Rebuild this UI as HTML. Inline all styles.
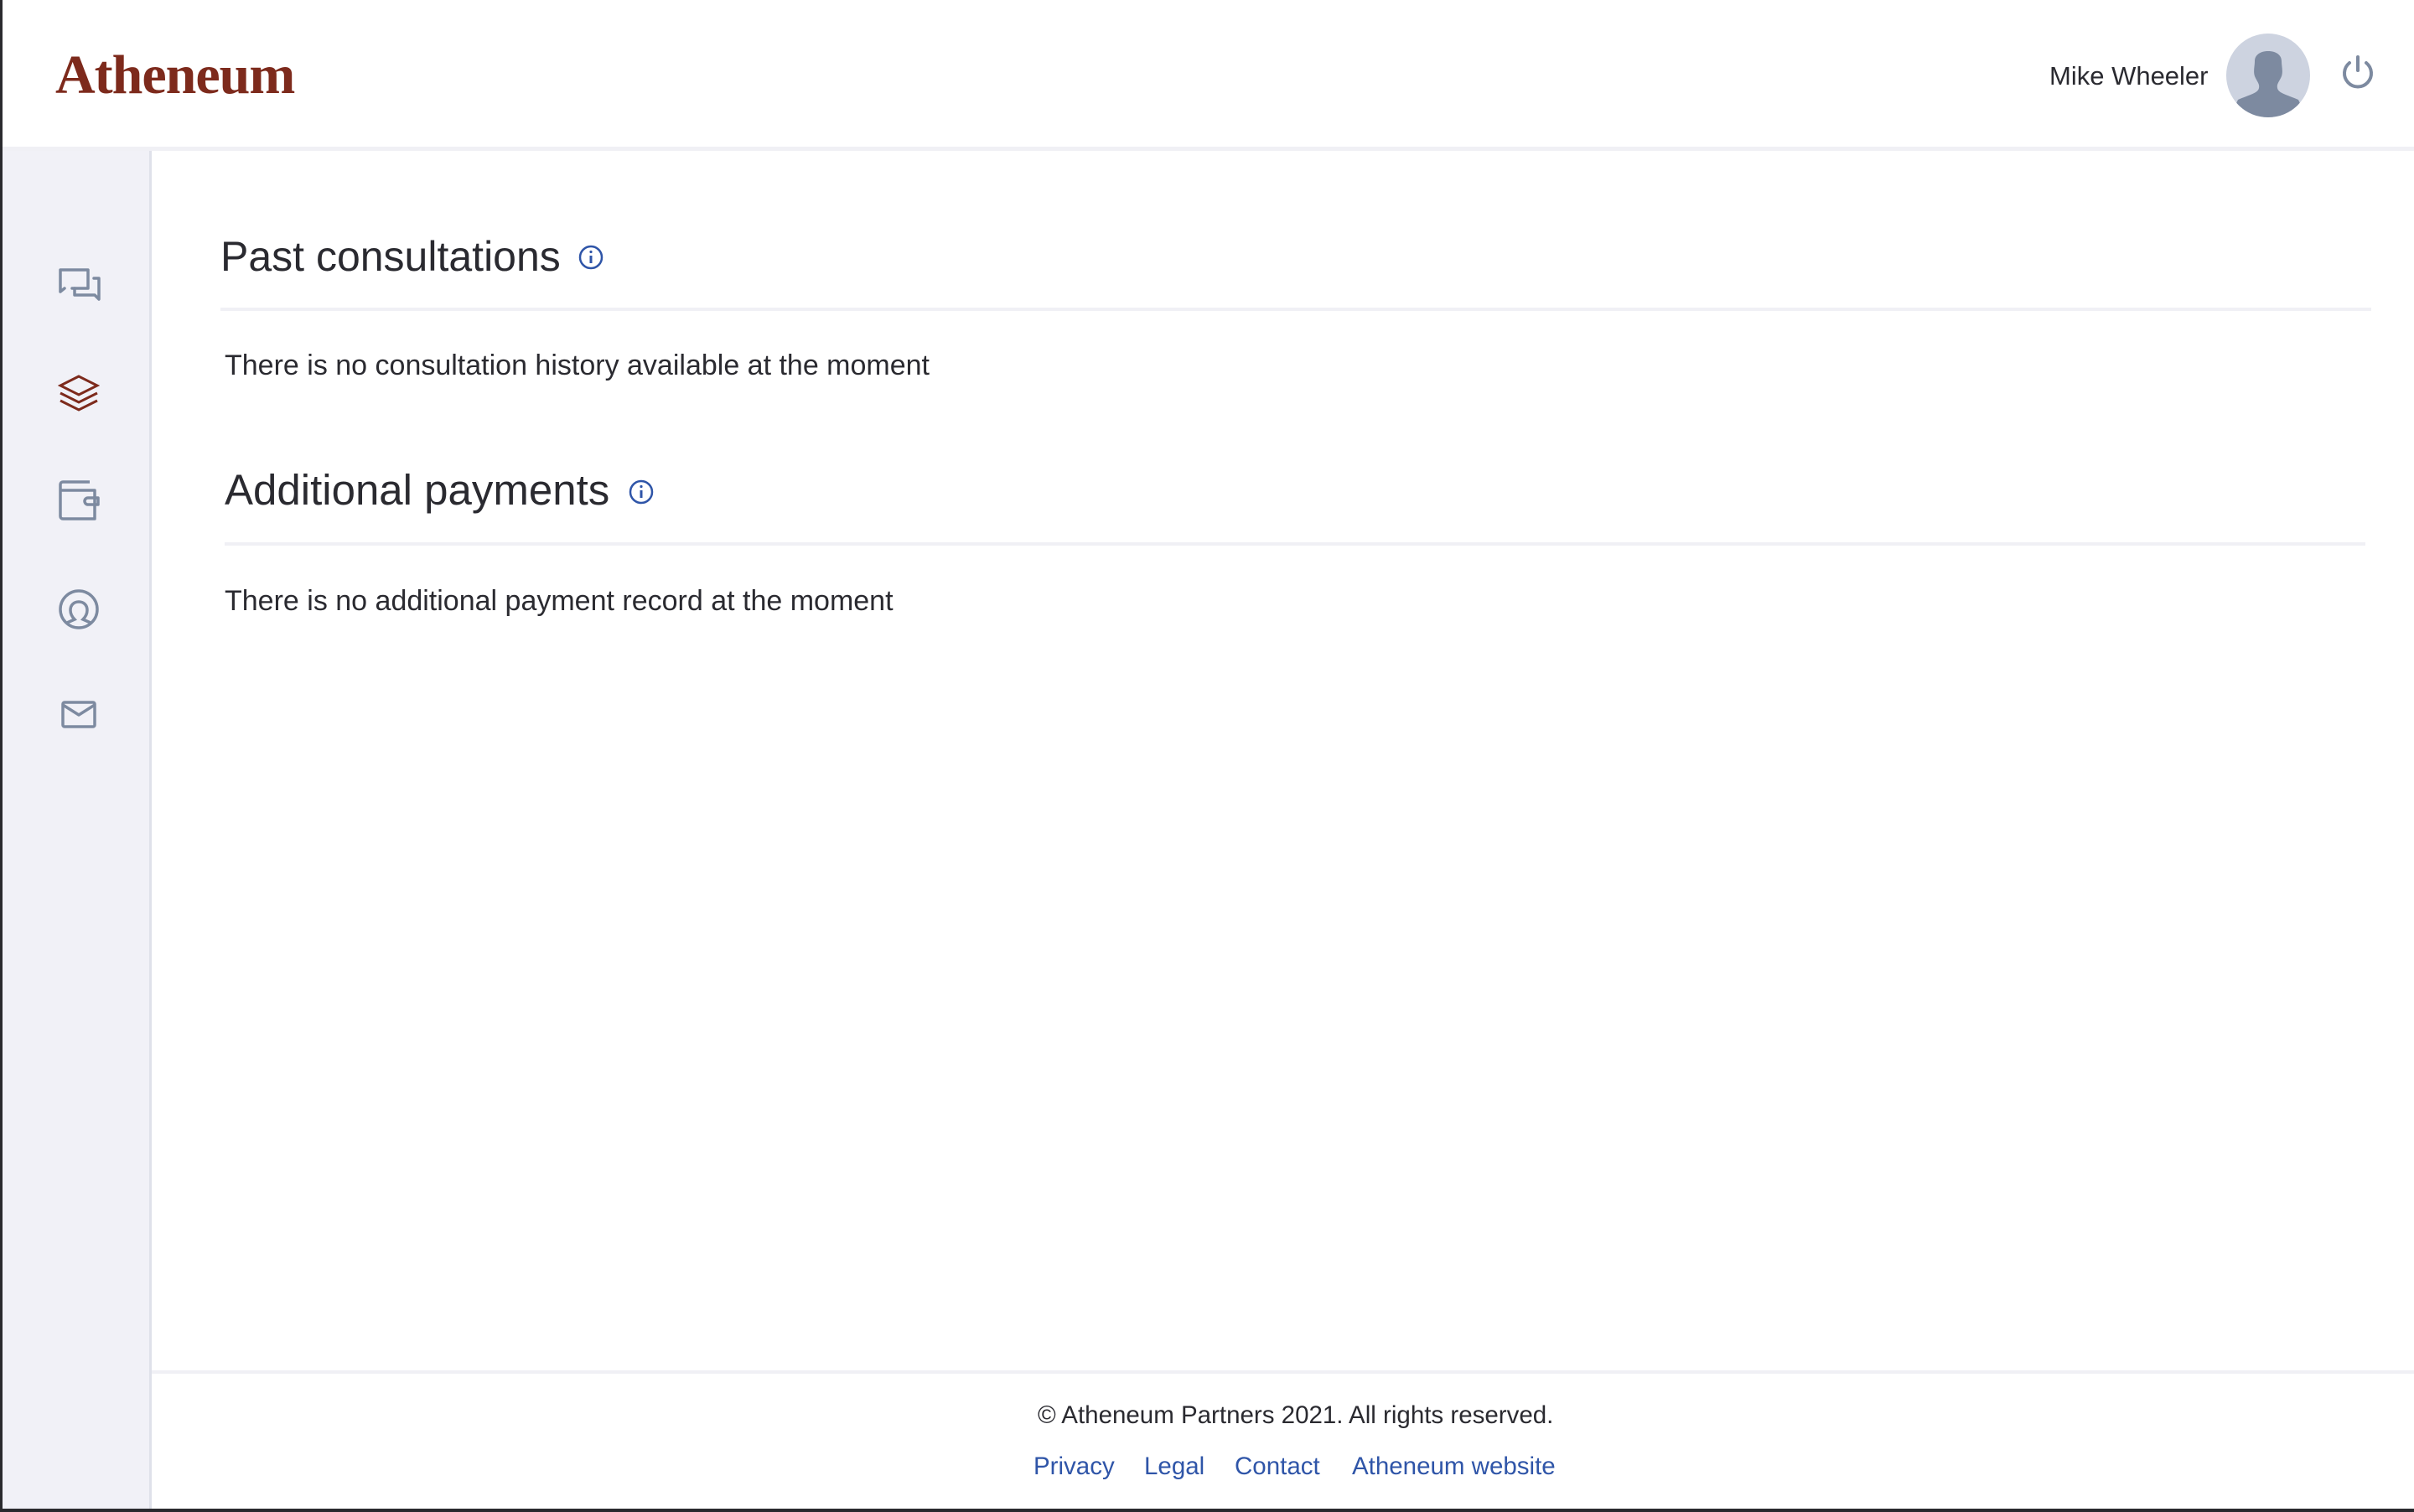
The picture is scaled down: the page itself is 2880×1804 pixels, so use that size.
<!DOCTYPE html>
<html><head><meta charset="utf-8"><style>
*{margin:0;padding:0;box-sizing:border-box}
body{width:2880px;height:1804px;position:relative;background:#fff;font-family:"Liberation Sans",sans-serif;color:#2a2a30;overflow:hidden}
.abs{position:absolute;white-space:nowrap}
</style></head><body>
<div class="abs" style="left:0;top:0;width:3px;height:1804px;background:#2a2a2e"></div>
<div class="abs" style="left:0;top:1800px;width:2880px;height:4px;background:#2a2a2e"></div>
<!-- header -->
<div class="abs" style="left:66px;top:50px;font-family:'Liberation Serif',serif;font-size:66px;color:#7d2a1c;letter-spacing:-1px;font-weight:bold;line-height:80px">Atheneum</div>
<div class="abs" style="left:3px;top:175px;width:2877px;height:5px;background:#f0f0f5"></div>
<div class="abs" style="left:2445px;top:71px;font-size:31px;line-height:40px;color:#2a2a30">Mike Wheeler</div>
<svg class="abs" style="left:2656px;top:40px" width="100" height="100" viewBox="0 0 100 100">
<defs><clipPath id="c"><circle cx="50" cy="50" r="50"/></clipPath></defs>
<circle cx="50" cy="50" r="50" fill="#cdd3e0"/>
<g clip-path="url(#c)" fill="#7d8aa0"><path d="M50 21c-10 0-16 5-16 12 0 6-2 12 0 18 3 7 6 9 5 14-1 6-11 8-25 14L4 100h92l-10-21c-14-6-24-8-25-14-1-5 2-7 5-14 2-6 0-12 0-18 0-7-6-12-16-12z"/></g>
</svg>
<svg class="abs" style="left:2792px;top:64px" width="42" height="44" viewBox="0 0 42 44" fill="none" stroke="#7d8aa0" stroke-width="4" stroke-linecap="round">
<path d="M21 4v16"/><path d="M11 11a16 16 0 1 0 20 0"/></svg>
<!-- sidebar -->
<div class="abs" style="left:3px;top:180px;width:178px;height:1620px;background:#f1f1f7;border-right:3px solid #dfe1ea"></div>
<svg class="abs" style="left:69px;top:318px" width="52" height="50" viewBox="0 0 52 50" fill="none" stroke="#7d8aa0" stroke-width="3.5" stroke-linejoin="round" stroke-linecap="round">
<path d="M3 30V4h33v22H17M3 30l5-4"/><path d="M20 26v8h24l5 5V14h-6"/></svg>
<svg class="abs" style="left:69px;top:446px" width="50" height="46" viewBox="0 0 50 46" fill="none" stroke="#7d2a1c" stroke-width="3">
<path d="M25 3L3 14l22 11 22-11z"/><path d="M3 23l22 11 22-11"/><path d="M3 32l22 11 22-11"/></svg>
<svg class="abs" style="left:69px;top:571px" width="50" height="52" viewBox="0 0 50 52" fill="none" stroke="#7d8aa0" stroke-width="3.5" stroke-linejoin="round">
<path d="M38 4H6a3 3 0 0 0-3 3v38a3 3 0 0 0 3 3h38V14H4"/><path d="M48 23H36a4 4 0 0 0 0 8h12z"/></svg>
<svg class="abs" style="left:69px;top:702px" width="50" height="50" viewBox="0 0 50 50" fill="none" stroke="#7d8aa0" stroke-width="3.5">
<circle cx="25" cy="25" r="22"/><path d="M11 41l9-4c-3-3-5-6-5-11 0-6 4-10 10-10s10 4 10 10c0 5-2 8-5 11l9 4"/></svg>
<svg class="abs" style="left:72px;top:835px" width="44" height="36" viewBox="0 0 44 36" fill="none" stroke="#7d8aa0" stroke-width="3.5" stroke-linejoin="round">
<rect x="3" y="3" width="38" height="29" rx="2"/><path d="M3 6l19 12 19-12"/></svg>
<!-- content -->
<div class="abs" style="left:263px;top:276px;font-size:50px;line-height:60px;color:#2a2a30">Past consultations</div>
<svg class="abs" style="left:690px;top:292px" width="30" height="30" viewBox="0 0 30 30" fill="none" stroke="#2f55a8" stroke-width="2.5"><circle cx="15" cy="15" r="13"/><path d="M15 13v9" stroke-width="3"/><circle cx="15" cy="8.5" r="1.6" fill="#2f55a8" stroke="none"/></svg>
<div class="abs" style="left:263px;top:367px;width:2566px;height:4px;background:#f0f0f5"></div>
<div class="abs" style="left:268px;top:416px;font-size:34px;line-height:40px">There is no consultation history available at the moment</div>
<div class="abs" style="left:268px;top:555px;font-size:51px;line-height:60px;color:#2a2a30">Additional payments</div>
<svg class="abs" style="left:750px;top:572px" width="30" height="30" viewBox="0 0 30 30" fill="none" stroke="#2f55a8" stroke-width="2.5"><circle cx="15" cy="15" r="13"/><path d="M15 13v9" stroke-width="3"/><circle cx="15" cy="8.5" r="1.6" fill="#2f55a8" stroke="none"/></svg>
<div class="abs" style="left:268px;top:647px;width:2554px;height:4px;background:#f0f0f5"></div>
<div class="abs" style="left:268px;top:697px;font-size:34px;line-height:40px">There is no additional payment record at the moment</div>
<!-- footer -->
<div class="abs" style="left:181px;top:1635px;width:2699px;height:4px;background:#f0f0f5"></div>
<div class="abs" style="left:1238px;top:1671px;font-size:29.5px;line-height:36px">© Atheneum Partners 2021. All rights reserved.</div>
<div class="abs" style="left:1233px;top:1732px;font-size:29.5px;line-height:36px;color:#2f55a8">Privacy</div>
<div class="abs" style="left:1365px;top:1732px;font-size:29.5px;line-height:36px;color:#2f55a8">Legal</div>
<div class="abs" style="left:1473px;top:1732px;font-size:29.5px;line-height:36px;color:#2f55a8">Contact</div>
<div class="abs" style="left:1613px;top:1732px;font-size:29.5px;line-height:36px;color:#2f55a8">Atheneum website</div>
</body></html>
